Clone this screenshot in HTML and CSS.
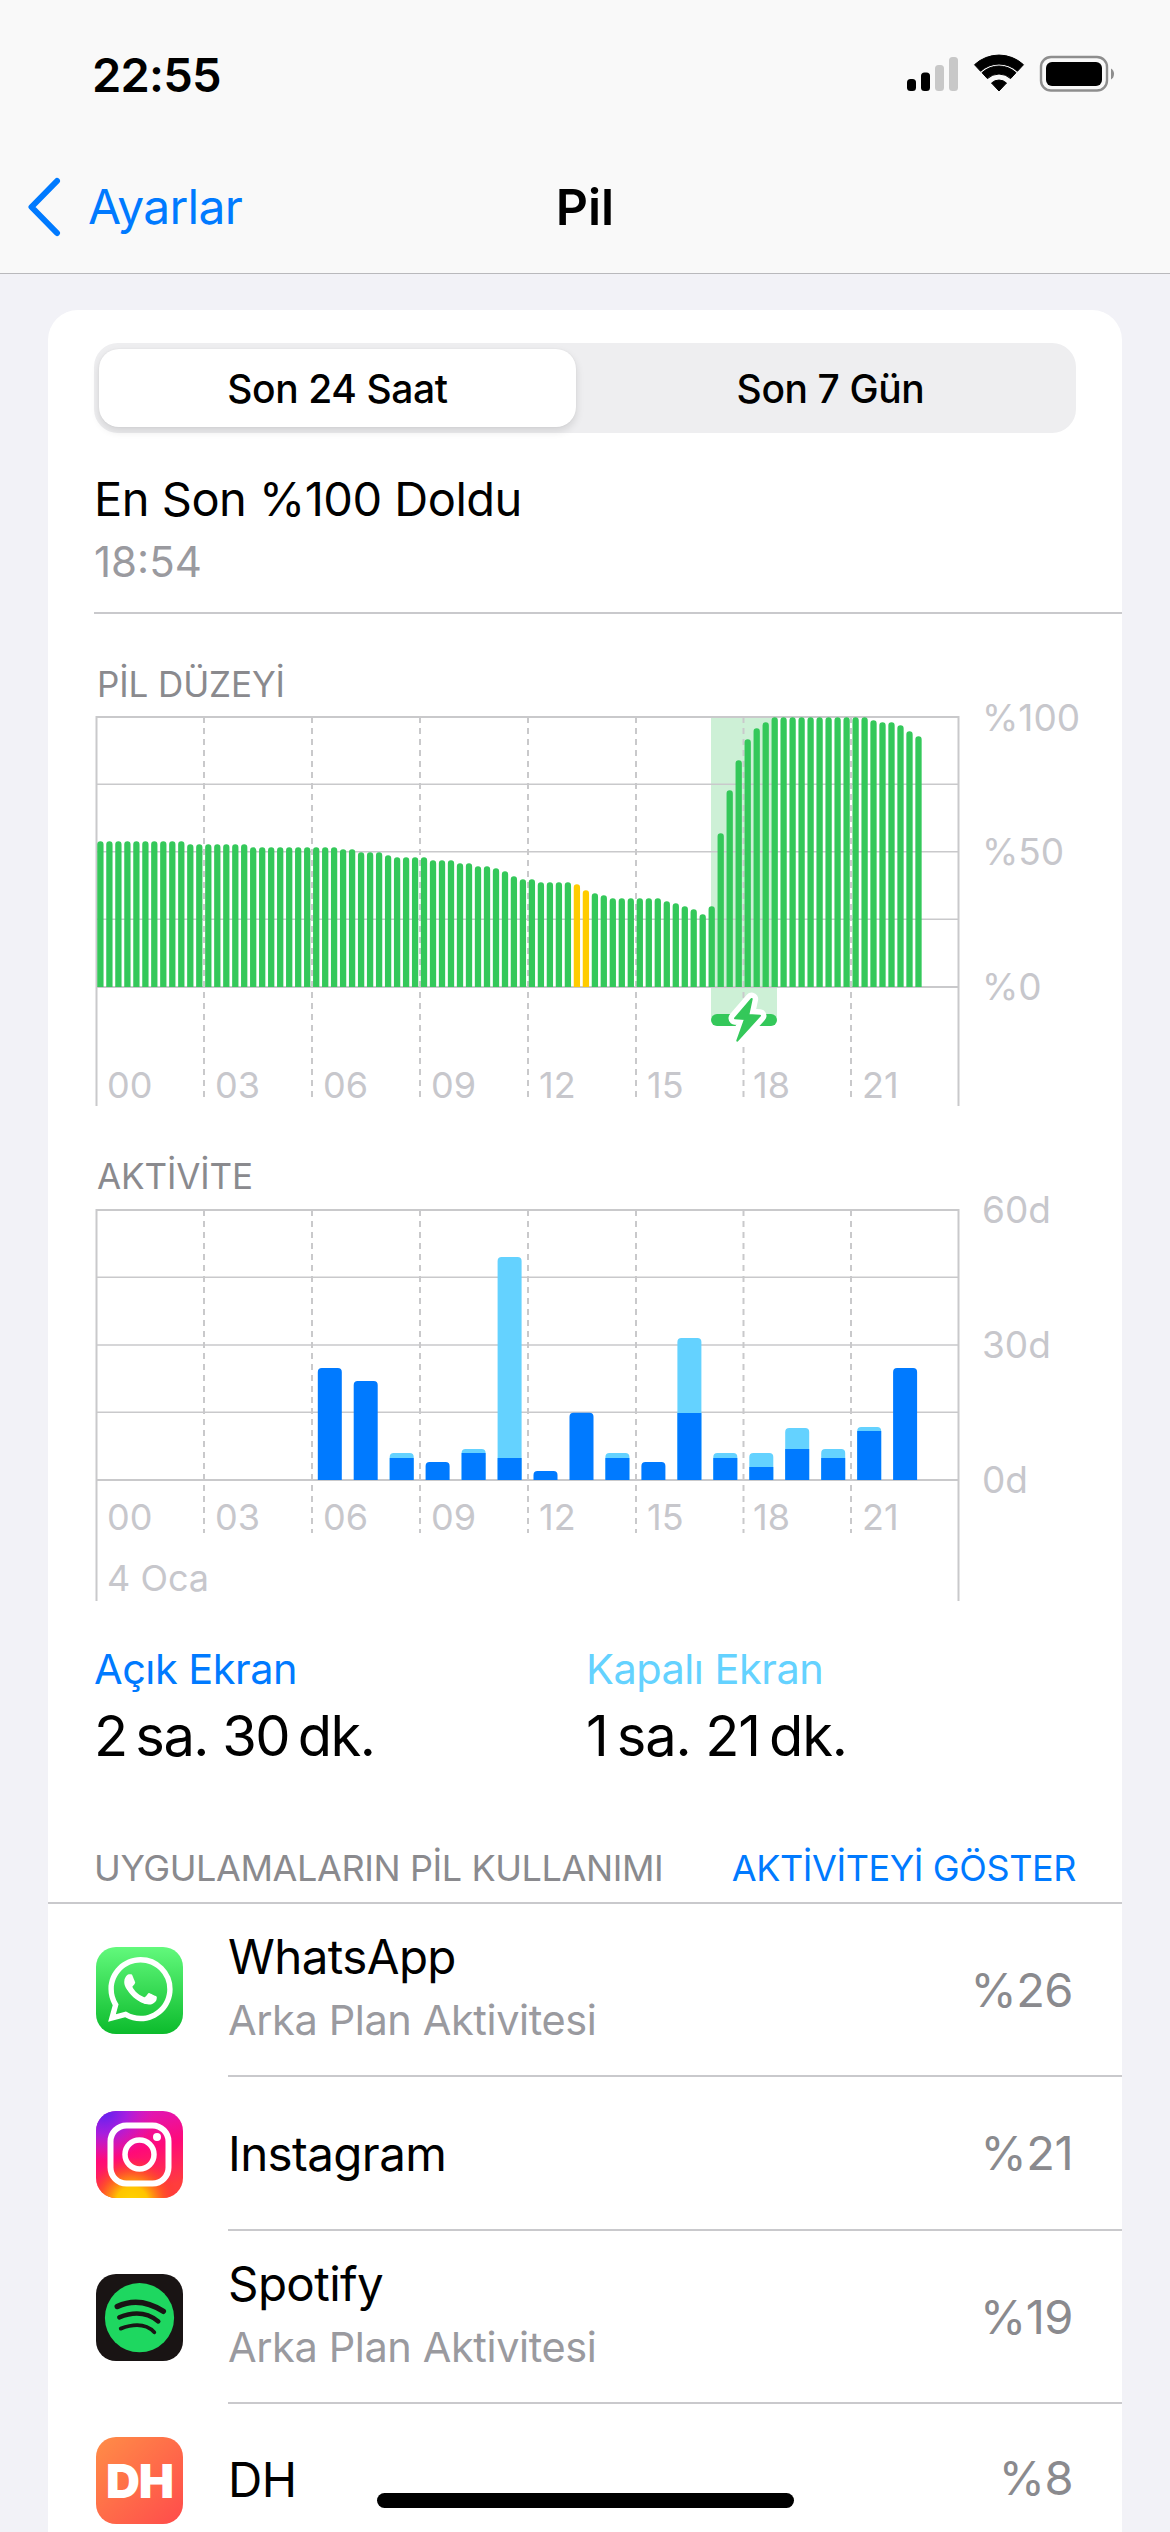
FILE: index.html
```html
<!DOCTYPE html>
<html lang="tr">
<head>
<meta charset="utf-8">
<title>Pil</title>
<link rel="stylesheet" href="styles.css">
</head>
<body>
<header class="top">
  <div class="status">
    <span class="clock">22:55</span>
    <svg class="status-icons" width="215" height="44" viewBox="905 52 215 44" aria-hidden="true">
      <rect x="907" y="79" width="9" height="12" rx="3.5" fill="#000"/>
      <rect x="921" y="72.5" width="9" height="18.5" rx="3.5" fill="#000"/>
      <rect x="935" y="65" width="9" height="26" rx="3.5" fill="#c8c8c8"/>
      <rect x="949" y="57" width="9" height="34" rx="3.5" fill="#c8c8c8"/>
      <g fill="#000" stroke="#000" stroke-width="1" stroke-linejoin="round">
        <path d="M974.5 64.7A36 36 0 0 1 1023.5 64.7L1017.4 71.3A27 27 0 0 0 980.6 71.3Z"/>
        <path d="M982 72.7A25 25 0 0 1 1016 72.7L1010.6 78.6A17 17 0 0 0 987.4 78.6Z"/>
        <path d="M991.5 83A11 11 0 0 1 1006.5 83L999 91Z"/>
      </g>
      <rect x="1041" y="57" width="66" height="33.5" rx="10" fill="none" stroke="#8e8e8e" stroke-width="2.4"/>
      <rect x="1046" y="62" width="56" height="24" rx="6" fill="#000"/>
      <path d="M1111 68.5a6.5 6.5 0 0 1 0 11z" fill="#8e8e8e"/>
    </svg>
  </div>
  <nav class="nav">
    <a class="back">
      <svg width="36" height="60" viewBox="0 0 36 60" aria-hidden="true"><path d="M31 4L5.5 30 31 56" fill="none" stroke="#007aff" stroke-width="6" stroke-linecap="round" stroke-linejoin="round"/></svg>
      <span>Ayarlar</span>
    </a>
    <h1 class="nav-title">Pil</h1>
  </nav>
</header>

<main class="card">
  <div class="segment">
    <div class="seg-item seg-on">Son 24 Saat</div>
    <div class="seg-item seg-off">Son 7 Gün</div>
  </div>

  <section class="last">
    <div class="last-title">En Son %100 Doldu</div>
    <div class="last-time">18:54</div>
  </section>

  <h2 class="chart-title chart-title-a">PİL DÜZEYİ</h2>
  <svg class="chart chart-a" width="1074" height="404" viewBox="48 706 1074 404">
    <rect x="711" y="718" width="66" height="300" fill="#cdf0d6"/>
    <g class="grid">
      <path class="line-thin" d="M96 785.3H959M96 852.7H959M96 920.3H959"/>
      <path d="M96.5 717V1107M958.5 717V1107M96 718H959M96 988H959"/>
      <path class="line-dash" d="M204 718V1102M312 718V1102M420 718V1102M528 718V1102M636 718V1102M743.5 718V1102M851 718V1102"/>
    </g>
    <defs><clipPath id="baseA"><rect x="90" y="700" width="870" height="288"/></clipPath></defs>
    <g clip-path="url(#baseA)">
      <path class="bars-green" d="M100.4 995V845.5M109.4 995V845.5M118.4 995V845.5M127.4 995V845.5M136.4 995V845.5M145.4 995V845.5M154.3 995V845.5M163.3 995V845.5M172.3 995V845.5M181.3 995V845.5M190.3 995V848.5M199.3 995V848.5M208.3 995V848.5M217.3 995V848.5M226.3 995V848.5M235.3 995V848.5M244.2 995V848.5M253.2 995V851.5M262.2 995V851.5M271.2 995V851.5M280.2 995V851.5M289.2 995V851.5M298.2 995V851.5M307.2 995V851.5M316.2 995V851.5M325.2 995V851.5M334.1 995V851.5M343.1 995V853.5M352.1 995V853.5M361.1 995V856.5M370.1 995V856.5M379.1 995V856.5M388.1 995V859.5M397.1 995V861.5M406.1 995V861.5M415.1 995V861.5M424 995V861.5M433 995V864.5M442 995V864.5M451 995V864.5M460 995V867.5M469 995V867.5M478 995V870.5M487 995V870.5M496 995V872.5M505 995V875.5M513.9 995V880.5M522.9 995V883.5M531.9 995V883.5M540.9 995V886.5M549.9 995V886.5M558.9 995V886.5M567.9 995V886.5M594.9 995V897.5M603.8 995V899.5M612.8 995V902.5M621.8 995V902.5M630.8 995V902.5M639.8 995V902.5M648.8 995V902.5M657.8 995V902.5M666.8 995V905.5M675.8 995V907.5M684.8 995V910.5M693.7 995V913.5M702.7 995V918.5M711.7 995V910.5M720.7 995V837.5M729.7 995V794.5M738.7 995V764.5M747.7 995V743.5M756.7 995V732.5M765.7 995V726.5M774.7 995V721.5M783.6 995V721.5M792.6 995V721.5M801.6 995V721.5M810.6 995V721.5M819.6 995V721.5M828.6 995V721.5M837.6 995V721.5M846.6 995V721.5M855.6 995V721.5M864.6 995V721.5M873.5 995V724.5M882.5 995V726.5M891.5 995V726.5M900.5 995V729.5M909.5 995V735.5M918.5 995V740.5"/>
      <path class="bars-yellow" d="M576.9 995V888.5M585.9 995V894.5"/>
    </g>
    <rect x="711" y="1015" width="66" height="12" rx="6" fill="#34c85a"/>
    <path d="M751.7 1000L735 1019.3 745 1020 737.3 1041.7 760 1016.7 748.3 1016Z" fill="#fff" stroke="#fff" stroke-width="13" stroke-linejoin="round"/>
    <path d="M751.7 1000L735 1019.3 745 1020 737.3 1041.7 760 1016.7 748.3 1016Z" fill="#34c85a" stroke="#34c85a" stroke-width="2" stroke-linejoin="round"/>
    <g class="ax">
      <text x="107" y="1099">00</text><text x="215" y="1099">03</text><text x="323" y="1099">06</text><text x="431" y="1099">09</text><text x="539" y="1099">12</text><text x="647" y="1099">15</text><text x="753" y="1099">18</text><text x="862" y="1099">21</text>
      <text class="ax-y" x="982" y="732">%100</text><text class="ax-y" x="982" y="866">%50</text><text class="ax-y" x="982" y="1001">%0</text>
    </g>
  </svg>

  <h2 class="chart-title chart-title-b">AKTİVİTE</h2>
  <svg class="chart chart-b" width="1074" height="402" viewBox="48 1200 1074 402">
    <g class="grid">
      <path class="line-thin" d="M96 1278.3H959M96 1346H959M96 1413.3H959"/>
      <path d="M96.5 1210V1602M958.5 1210V1602M96 1211H959M96 1481H959"/>
      <path class="line-dash" d="M204 1211V1534M312 1211V1534M420 1211V1534M528 1211V1534M636 1211V1534M743.5 1211V1534M851 1211V1534"/>
    </g>
    <path class="bar-light" d="M389.7 1481V1458q0-4 4-4h16q4 0 4 4V1481zM461.6 1481V1454q0-4 4-4h16q4 0 4 4V1481zM497.6 1481V1262q0-4 4-4h16q4 0 4 4V1481zM605.4 1481V1458q0-4 4-4h16q4 0 4 4V1481zM677.4 1481V1343q0-4 4-4h16q4 0 4 4V1481zM713.3 1481V1458q0-4 4-4h16q4 0 4 4V1481zM749.3 1481V1458q0-4 4-4h16q4 0 4 4V1481zM785.2 1481V1433q0-4 4-4h16q4 0 4 4V1481zM821.2 1481V1454q0-4 4-4h16q4 0 4 4V1481zM857.2 1481V1432q0-4 4-4h16q4 0 4 4V1481z"/>
    <path class="bar-dark" d="M317.8 1481V1373q0-4 4-4h16q4 0 4 4V1481zM353.7 1481V1386q0-4 4-4h16q4 0 4 4V1481zM389.7 1481V1459h24v22zM425.6 1481V1467q0-4 4-4h16q4 0 4 4V1481zM461.6 1481V1454h24v27zM497.6 1481V1459h24v22zM533.5 1481V1476q0-4 4-4h16q4 0 4 4V1481zM569.5 1481V1417.7q0-4 4-4h16q4 0 4 4V1481zM605.4 1481V1459h24v22zM641.4 1481V1467q0-4 4-4h16q4 0 4 4V1481zM677.4 1481V1414h24v67zM713.3 1481V1459h24v22zM749.3 1481V1468h24v13zM785.2 1481V1450h24v31zM821.2 1481V1459h24v22zM857.2 1481V1432h24v49zM893.1 1481V1373q0-4 4-4h16q4 0 4 4V1481z"/>
    <g class="ax">
      <text x="107" y="1531">00</text><text x="215" y="1531">03</text><text x="323" y="1531">06</text><text x="431" y="1531">09</text><text x="539" y="1531">12</text><text x="647" y="1531">15</text><text x="753" y="1531">18</text><text x="862" y="1531">21</text>
      <text x="107" y="1592">4 Oca</text>
      <text class="ax-y" x="982" y="1224">60d</text><text class="ax-y" x="982" y="1359">30d</text><text class="ax-y" x="982" y="1494">0d</text>
    </g>
  </svg>

  <section class="stats">
    <div class="stat stat-on">
      <div class="stat-label">Açık Ekran</div>
      <div class="stat-value">2&#8201;sa. 30&#8201;dk.</div>
    </div>
    <div class="stat stat-off">
      <div class="stat-label">Kapalı Ekran</div>
      <div class="stat-value stat-value-wide">1&#8201;sa. 21&#8201;dk.</div>
    </div>
  </section>

  <div class="list-head">
    <span>UYGULAMALARIN PİL KULLANIMI</span>
    <a class="list-link">AKTİVİTEYİ GÖSTER</a>
  </div>

  <ul class="apps">
    <li class="app app-tall">
      <svg class="icon" width="87" height="87" viewBox="0 0 87 87" aria-hidden="true">
        <defs><linearGradient id="wa" x1="0" y1="0" x2="0" y2="1"><stop offset="0" stop-color="#62f97c"/><stop offset="1" stop-color="#0cbb2c"/></linearGradient></defs>
        <rect width="87" height="87" rx="20" fill="url(#wa)"/>
        <path transform="translate(12 10) scale(2.7)" fill="#fff" d="M17.472 14.382c-.297-.149-1.758-.867-2.03-.967-.273-.099-.471-.148-.67.15-.197.297-.767.966-.94 1.164-.173.199-.347.223-.644.075-.297-.15-1.255-.463-2.39-1.475-.883-.788-1.48-1.761-1.653-2.059-.173-.297-.018-.458.13-.606.134-.133.298-.347.446-.52.149-.174.198-.298.298-.497.099-.198.05-.371-.025-.52-.075-.149-.669-1.612-.916-2.207-.242-.579-.487-.5-.669-.51-.173-.008-.371-.01-.57-.01-.198 0-.52.074-.792.372-.272.297-1.04 1.016-1.04 2.479 0 1.462 1.065 2.875 1.213 3.074.149.198 2.096 3.2 5.077 4.487.709.306 1.262.489 1.694.625.712.227 1.36.195 1.871.118.571-.085 1.758-.719 2.006-1.413.248-.694.248-1.289.173-1.413-.074-.124-.272-.198-.57-.347m-5.421 7.403h-.004a9.87 9.87 0 01-5.031-1.378l-.361-.214-3.741.982.998-3.648-.235-.374a9.86 9.86 0 01-1.51-5.26c.001-5.45 4.436-9.884 9.888-9.884 2.64 0 5.122 1.03 6.988 2.898a9.825 9.825 0 012.893 6.994c-.003 5.45-4.437 9.884-9.885 9.884m8.413-18.297A11.815 11.815 0 0012.05 0C5.495 0 .16 5.335.157 11.892c0 2.096.547 4.142 1.588 5.945L.057 24l6.305-1.654a11.882 11.882 0 005.683 1.448h.005c6.554 0 11.89-5.335 11.893-11.893a11.821 11.821 0 00-3.48-8.413z"/>
      </svg>
      <div class="app-body">
        <div class="app-text"><div class="app-name">WhatsApp</div><div class="app-sub">Arka Plan Aktivitesi</div></div>
        <div class="app-pct">%26</div>
      </div>
    </li>
    <li class="app app-short">
      <svg class="icon" width="87" height="87" viewBox="0 0 87 87" aria-hidden="true">
        <defs>
          <linearGradient id="igBase" x1="0" y1="0" x2="0.25" y2="1"><stop offset="0" stop-color="#d51bc9"/><stop offset="0.55" stop-color="#ff0a78"/><stop offset="1" stop-color="#ff3d3d"/></linearGradient>
          <radialGradient id="igY" gradientUnits="userSpaceOnUse" cx="36" cy="92" r="46"><stop offset="0" stop-color="#ffd600"/><stop offset="0.35" stop-color="#ffc400"/><stop offset="0.7" stop-color="#ff5a1f" stop-opacity="0.75"/><stop offset="1" stop-color="#ff3030" stop-opacity="0"/></radialGradient>
          <radialGradient id="igP" gradientUnits="userSpaceOnUse" cx="8" cy="0" r="50"><stop offset="0" stop-color="#5a22f0"/><stop offset="0.45" stop-color="#9a20e8" stop-opacity="0.85"/><stop offset="1" stop-color="#c81ad0" stop-opacity="0"/></radialGradient>
        </defs>
        <rect width="87" height="87" rx="20" fill="url(#igBase)"/>
        <rect width="87" height="87" rx="20" fill="url(#igY)"/>
        <rect width="87" height="87" rx="20" fill="url(#igP)"/>
        <rect x="14.5" y="14.5" width="58" height="58" rx="16" fill="none" stroke="#fff" stroke-width="6"/>
        <circle cx="43.5" cy="43.5" r="14.5" fill="none" stroke="#fff" stroke-width="5.5"/>
        <circle cx="61" cy="26" r="4" fill="#fff"/>
      </svg>
      <div class="app-body">
        <div class="app-text"><div class="app-name">Instagram</div></div>
        <div class="app-pct">%21</div>
      </div>
    </li>
    <li class="app app-tall">
      <svg class="icon" width="87" height="87" viewBox="0 0 87 87" aria-hidden="true">
        <rect width="87" height="87" rx="20" fill="#191414"/>
        <circle cx="43.5" cy="43.7" r="34.6" fill="#1ed760"/>
        <g fill="none" stroke="#191414" stroke-linecap="round">
          <path d="M21.3 32.5Q43.7 21.9 67.3 37.3" stroke-width="5.5"/>
          <path d="M23.3 43.4Q45.8 34 62.3 47.4" stroke-width="4.5"/>
          <path d="M24.7 54.6Q47 46.3 58.3 58.3" stroke-width="3.8"/>
        </g>
      </svg>
      <div class="app-body">
        <div class="app-text"><div class="app-name">Spotify</div><div class="app-sub">Arka Plan Aktivitesi</div></div>
        <div class="app-pct">%19</div>
      </div>
    </li>
    <li class="app app-last">
      <div class="icon icon-dh">DH</div>
      <div class="app-body app-body-last">
        <div class="app-text"><div class="app-name">DH</div></div>
        <div class="app-pct">%8</div>
      </div>
    </li>
  </ul>
</main>
<div class="home-bar"></div>
</body>
</html>
```
FILE: styles.css
```css
* { box-sizing: border-box; }
html, body { margin: 0; padding: 0; }
body {
  position: relative;
  width: 1170px;
  height: 2532px;
  overflow: hidden;
  background: #f2f2f7;
  font-family: Inter, "Liberation Sans", sans-serif;
  color: #000;
}
.top {
  height: 274px;
  background: #f9f9f9;
  border-bottom: 1px solid #b9b9bc;
}
.status {
  height: 150px;
  display: flex;
  align-items: flex-start;
  justify-content: space-between;
}
.clock {
  margin: 47px 0 0 92px;
  font-size: 47px;
  line-height: 56px;
  font-weight: 600;
  letter-spacing: -0.8px;
}
.status-icons { margin: 52px 50px 0 0; }
.nav {
  position: relative;
  height: 123px;
  display: flex;
  align-items: flex-start;
}
.back {
  display: flex;
  align-items: flex-start;
  margin-left: 26px;
  color: #007aff;
  font-size: 48px;
  line-height: 58px;
  letter-spacing: -0.7px;
}
.back svg { margin-top: 27px; }
.back span { margin: 28px 0 0 26px; }
.nav-title {
  position: absolute;
  left: 0;
  right: 0;
  top: 28px;
  margin: 0;
  text-align: center;
  font-size: 50px;
  line-height: 58px;
  font-weight: 600;
}
.card {
  margin: 36px 48px 0;
  background: #fff;
  border-radius: 30px 30px 0 0;
  padding-top: 33px;
}
.segment {
  margin: 0 46px;
  height: 90px;
  padding: 6px 5px;
  display: flex;
  background: #eeeef0;
  border-radius: 24px;
}
.seg-item {
  flex: 1;
  display: flex;
  align-items: center;
  justify-content: center;
  font-size: 39px;
  font-weight: 500;
  letter-spacing: -0.4px;
  border-radius: 20px;
}
.seg-off { padding-left: 14px; }
.seg-on {
  flex: 0 0 477px;
  background: #fff;
  box-shadow: 0 4px 8px rgba(0, 0, 0, 0.12), 0 0 2px rgba(0, 0, 0, 0.06);
}
.last {
  margin-left: 46px;
  padding-top: 38px;
  height: 181px;
  border-bottom: 2px solid #c9c9cc;
}
.last-title {
  font-size: 47px;
  line-height: 56px;
  letter-spacing: -0.5px;
}
.last-time {
  margin-top: 12px;
  font-size: 42px;
  line-height: 46px;
  color: #9a9a9f;
}
.chart-title {
  margin: 0 0 0 49px;
  font-size: 35px;
  line-height: 40px;
  font-weight: 400;
  color: #8a8a8e;
  letter-spacing: -0.1px;
}
.chart-title-a { padding-top: 50px; }
.chart-title-b { padding-top: 47px; }
.chart { display: block; overflow: visible; }
.chart-a { margin-top: 1px; }
.chart-b { margin-top: 3px; }
.grid path { fill: none; stroke: #c9c9cb; stroke-width: 2; }
.grid .line-thin { stroke-width: 1.5; }
.grid .line-dash { stroke-width: 2; stroke-dasharray: 6 5; }
.bars-green, .bars-yellow { fill: none; stroke-width: 6.3; stroke-linecap: round; }
.bars-green { stroke: #34c85a; }
.bars-yellow { stroke: #ffcc00; }
.bar-light { fill: #64d2ff; }
.bar-dark { fill: #007aff; }
.ax text {
  font-family: Inter, "Liberation Sans", sans-serif;
  font-size: 36px;
  fill: #c7c7cc;
}
.ax .ax-y { font-size: 37px; }
.stats {
  display: flex;
  margin: 44px 0 0 46px;
}
.stat { flex: 0 0 492px; }
.stat-label {
  font-size: 41.5px;
  line-height: 48px;
  letter-spacing: -0.5px;
}
.stat-on .stat-label { color: #007aff; }
.stat-off .stat-label { color: #64d2ff; }
.stat-value {
  margin-top: 9px;
  font-size: 56px;
  line-height: 68px;
  letter-spacing: -1.5px;
}
.stat-value-wide { letter-spacing: -1.1px; }
.list-head {
  display: flex;
  justify-content: space-between;
  margin-top: 78px;
  padding: 0 46px 14px;
  border-bottom: 2px solid #c9c9cc;
  font-size: 36px;
  line-height: 40px;
  color: #8a8a8e;
  letter-spacing: -0.4px;
}
.list-link { color: #007aff; }
.apps { list-style: none; margin: 0; padding: 0; }
.app {
  display: flex;
  align-items: stretch;
  padding-left: 48px;
}
.app-tall { height: 173px; }
.app-short { height: 154px; }
.app-last { height: 200px; }
.icon { flex: none; align-self: center; margin-right: 45px; }
.app-last .icon { align-self: flex-start; margin-top: 33px; }
.icon-dh {
  width: 87px;
  height: 87px;
  border-radius: 20px;
  background: linear-gradient(135deg, #ff8d47, #ff4b4b);
  color: #fff;
  font-size: 47px;
  font-weight: 900;
  line-height: 87px;
  text-align: center;
  letter-spacing: -1px;
}
.app-body {
  flex: 1;
  display: flex;
  align-items: center;
  justify-content: space-between;
  padding-right: 49px;
  border-bottom: 2px solid #c9c9cc;
}
.app-body-last {
  align-items: flex-start;
  padding-top: 46px;
  border-bottom: 0;
}
.app-tall .app-text { padding-bottom: 8px; }
.app-short .app-text, .app-last .app-text { padding-top: 2px; }
.app-name {
  font-size: 47.5px;
  line-height: 56px;
  letter-spacing: -0.6px;
}
.app-sub {
  margin-top: 12px;
  font-size: 41.5px;
  line-height: 46px;
  color: #9a9a9f;
  letter-spacing: -0.4px;
}
.app-pct {
  font-size: 47px;
  line-height: 56px;
  color: #8a8a8e;
  letter-spacing: -0.5px;
}
.home-bar {
  position: absolute;
  left: 377px;
  top: 2493px;
  width: 417px;
  height: 15px;
  border-radius: 8px;
  background: #000;
}
```
